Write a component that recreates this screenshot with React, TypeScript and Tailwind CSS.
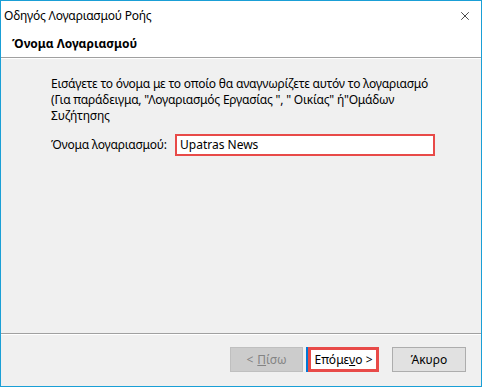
import { X } from 'lucide-react';

const font = { fontFamily: '"Noto Sans", "Segoe UI", sans-serif' };

export default function App() {
  return (
    <div
      style={font}
      className="flex h-[387px] w-[482px] flex-col border border-[#1a9fd6] bg-[#f0f0f0] text-[12px] text-black"
    >
      {/* title bar */}
      <div className="flex h-[29px] shrink-0 items-center justify-between bg-white pl-[3px] pr-[9px]">
        <span className="leading-none tracking-[-0.2px]">Οδηγός Λογαριασμού Ροής</span>
        <X className="h-[14px] w-[14px] text-[#222]" strokeWidth={1.4} />
      </div>

      {/* header */}
      <div className="flex h-[28px] shrink-0 items-center border-b border-[#a0a0a0] bg-white pl-[11px]">
        <span className="font-bold leading-none">Όνομα Λογαριασμού</span>
      </div>

      {/* body */}
      <div className="flex flex-1 flex-col border-t border-white pl-[50px] pt-[17px]">
        <p className="whitespace-nowrap leading-[16px] tracking-[-0.2px]">
          Εισάγετε το όνομα με το οποίο θα αναγνωρίζετε αυτόν το λογαριασμό
          <br />
          (Για παράδειγμα, "Λογαριασμός Εργασίας ", " Οικίας" ή"Ομάδων
          <br />
          Συζήτησης
        </p>
        <div className="mt-[10px] flex items-center">
          <span className="w-[124px] tracking-[-0.2px]">Όνομα λογαριασμού:</span>
          <div className="flex h-[22px] w-[260px] items-center border-2 border-[#e84a48] bg-white pl-[3px]">
            Upatras News
          </div>
        </div>
      </div>

      {/* footer */}
      <div className="flex h-[53px] shrink-0 items-start justify-end gap-[3px] border-t border-[#a0a0a0] pr-[15px] pt-[13px] shadow-[inset_0_1px_0_#ffffff]">
        <button className="flex h-[25px] w-[73px] items-center justify-center border border-[#bfbfbf] bg-[#cccccc] text-[#838383]">
          &lt; <span className="ml-[4px] underline">Π</span>ίσω
        </button>
        <button className="flex h-[25px] w-[73px] items-center justify-center border-l-2 border-[#0078d7] bg-white">
          <span className="flex h-full w-full items-center justify-center border-[3px] border-[#e84a48]">
            Επόμε<span className="underline">ν</span>ο &gt;
          </span>
        </button>
        <button className="ml-[10px] flex h-[25px] w-[74px] items-center justify-center border border-[#adadad] bg-[#e1e1e1]">
          Άκυρο
        </button>
      </div>
    </div>
  );
}
